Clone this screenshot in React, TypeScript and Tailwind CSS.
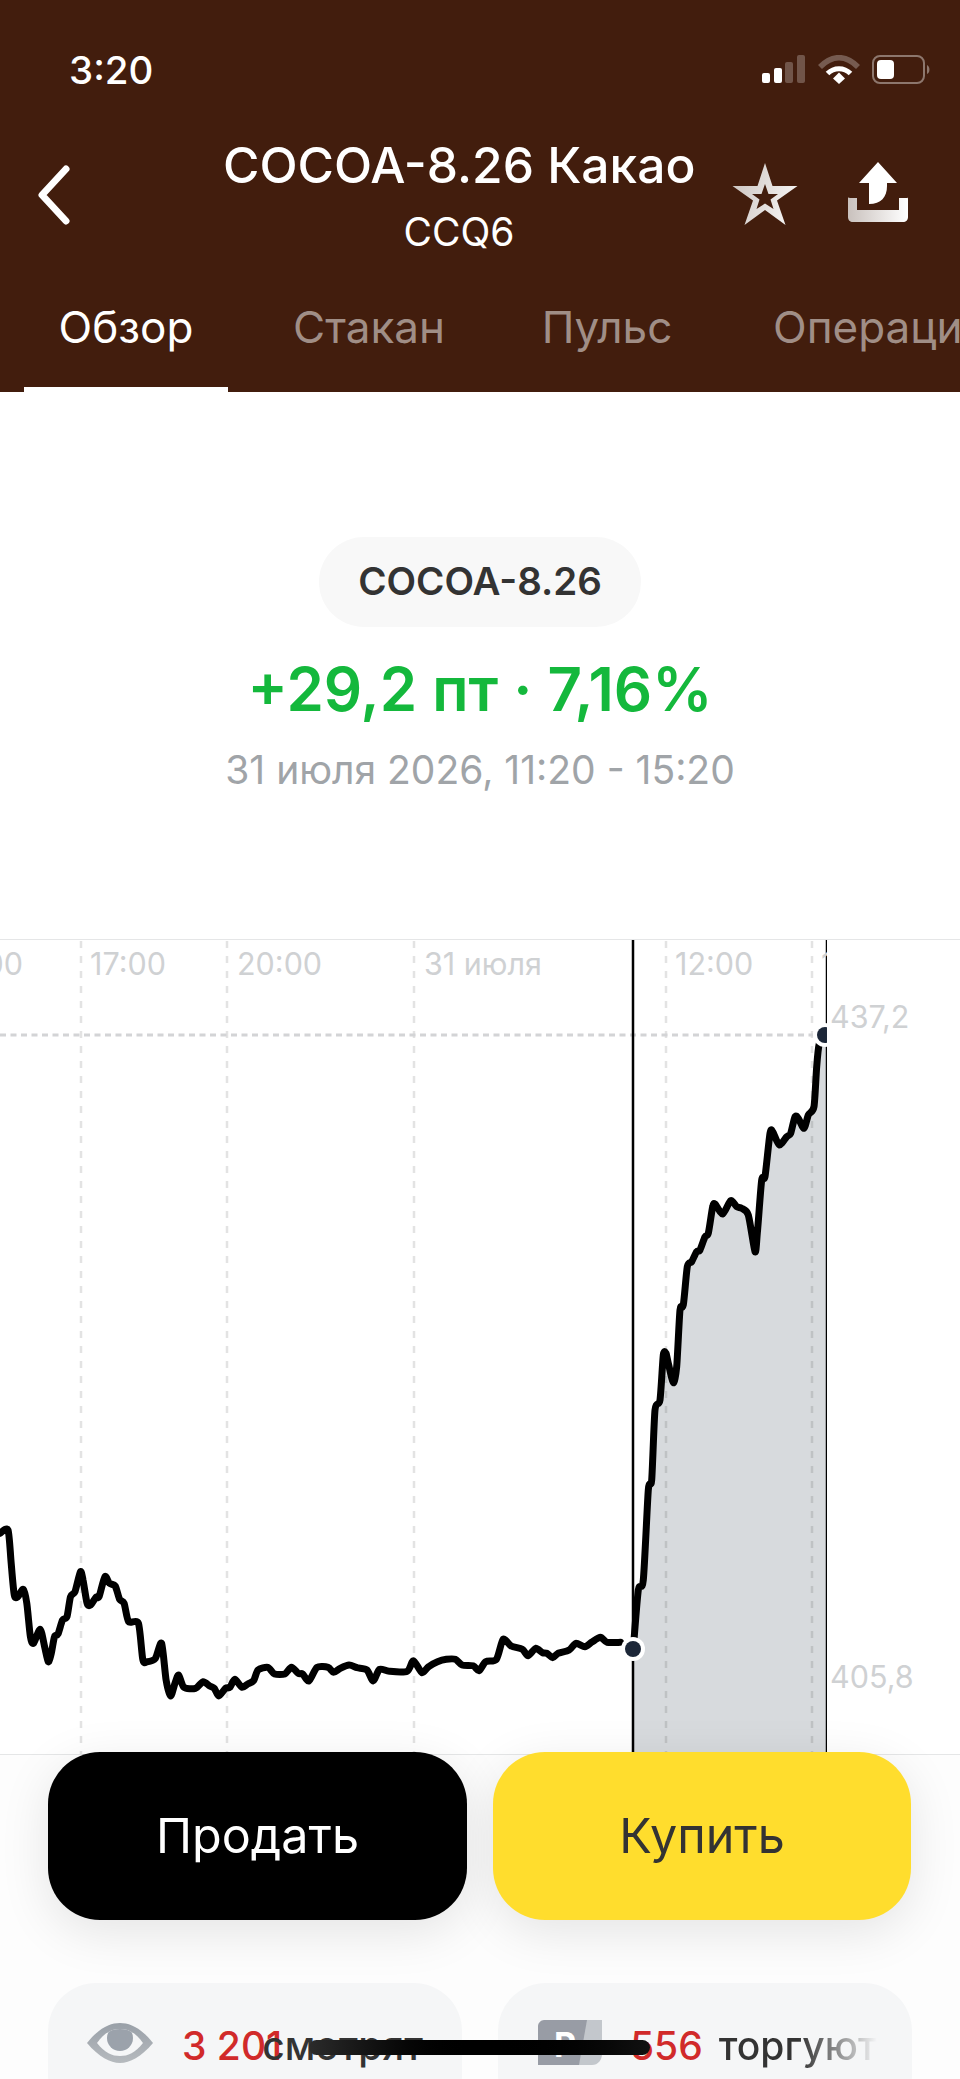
import React from "react";

const rawLeft: number[][] = [[0,160],[18,150],[25,250],[32,345],[40,350],[52,328],[60,370],[68,470],[75,490],[90,448],[100,500],[108,545],[115,520],[122,470],[130,462],[140,420],[150,410],[158,350],[168,335],[180,275],[186,300],[195,370],[203,375],[215,352],[222,350],[235,290],[245,310],[258,318],[268,358],[278,370],[288,425],[310,430],[320,540],[330,545],[348,535],[362,490],[372,600],[382,648],[392,610],[400,585],[412,622],[438,625],[455,605],[470,618],[480,625],[490,648],[505,625],[515,622],[526,598],[542,622],[555,612],[568,602],[578,570],[600,562],[615,582],[638,582],[653,562],[668,580],[678,582],[692,603],[710,562],[735,562],[747,577],[762,565],[782,555],[800,563],[822,570],[836,603],[850,568],[872,574],[912,574],[926,542],[945,578],[960,560],[980,545],[1000,538],[1020,538],[1035,555],[1060,557],[1073,572],[1088,545],[1112,538],[1127,478],[1145,498],[1170,508],[1183,527],[1200,505],[1215,518],[1225,520],[1238,533],[1250,520],[1275,510],[1290,490],[1310,500],[1325,487],[1345,472],[1360,487],[1390,487]];
const rawRightA: number[][] = [[100,745],[115,570],[130,540],[145,270],[155,240],[165,30],[180,0]];
const rawRightB: number[][] = [[190,1065],[198,1060],[205,1090],[220,1148],[230,1100],[240,930],[250,915],[262,800],[275,785],[290,755],[300,750],[315,710],[325,700],[338,620],[345,612],[368,642],[392,602],[410,620],[425,625],[445,645],[465,755],[472,700],[485,540],[495,530],[510,400],[518,395],[538,435],[560,410],[572,400],[585,350],[595,355],[612,385],[625,345],[642,320],[650,200],[658,130],[675,105]];

const leftPts = rawLeft.map(([x, y]) => [x / 2.24, 1480 + y / 3]);
const rightPts = [
  ...rawRightA.map(([x, y]) => [600 + x / 3, 1400 + y / 3]),
  ...rawRightB.map(([x, y]) => [600 + x / 3, 1000 + y / 3]),
];

function smooth(p: number[][]) {
  let d = `M${p[0][0].toFixed(1)} ${p[0][1].toFixed(1)}`;
  for (let i = 0; i < p.length - 1; i++) {
    const a = p[Math.max(i - 1, 0)];
    const b = p[i];
    const c = p[i + 1];
    const e = p[Math.min(i + 2, p.length - 1)];
    const c1x = b[0] + (c[0] - a[0]) / 8;
    const c1y = b[1] + (c[1] - a[1]) / 8;
    const c2x = c[0] - (e[0] - b[0]) / 8;
    const c2y = c[1] - (e[1] - b[1]) / 8;
    d += `C${c1x.toFixed(1)} ${c1y.toFixed(1)} ${c2x.toFixed(1)} ${c2y.toFixed(1)} ${c[0].toFixed(1)} ${c[1].toFixed(1)}`;
  }
  return d;
}

const leftD = smooth(leftPts);
const rightD = smooth(rightPts);
const fillD = `${rightD}L830 1035L830 1754L633 1754Z`;
const gridX = [81, 227, 414, 666, 812];
const font = "Inter, 'Liberation Sans', sans-serif";

function Chart() {
  return (
    <svg width="960" height="815" viewBox="0 939 960 815" className="block border-0">
      <defs>
        <clipPath id="chartClip">
          <rect x="0" y="939" width="827" height="815" />
        </clipPath>
      </defs>
      <line x1="0" x2="960" y1="939.5" y2="939.5" stroke="#e5e6e7" strokeWidth="1" />
      <g clipPath="url(#chartClip)">
        <path d={fillD} fill="#d7dadd" />
        {gridX.map((x) => (
          <line key={x} x1={x} x2={x} y1="941" y2="1754" stroke="#000" strokeOpacity="0.11" strokeWidth="2.5" strokeDasharray="7 8" />
        ))}
        <line x1="0" x2="822" y1="1035" y2="1035" stroke="#d3d4d6" strokeWidth="3" strokeDasharray="6 4.5" />
        <line x1="633" x2="633" y1="940" y2="1754" stroke="#000" strokeWidth="2.5" />
        <line x1="826.500" x2="826.500" y1="940" y2="1754" stroke="#000" strokeWidth="1.5" />
        <path d={leftD} fill="none" stroke="#000" strokeWidth="7" strokeLinejoin="round" strokeLinecap="round" />
        <path d={rightD} fill="none" stroke="#000" strokeWidth="7" strokeLinejoin="round" strokeLinecap="round" />
        <circle cx="633" cy="1649" r="12" fill="#fff" />
        <circle cx="633" cy="1649" r="8" fill="#1c2738" />
        <circle cx="825" cy="1035" r="12" fill="#fff" />
        <circle cx="825" cy="1035" r="8" fill="#1c2738" />
        <text x="821" y="975" fontSize="30.5" fill="#cfd1d3" fontFamily={font}>15:00</text>
      </g>
      <g fontSize="30.5" fill="#cfd1d3" fontFamily={font}>
        <text x="23" y="975" textAnchor="end">14:00</text>
        <text x="90" y="975">17:00</text>
        <text x="237" y="975">20:00</text>
        <text x="424" y="975">31 июля</text>
        <text x="675" y="975">12:00</text>
        <text x="830" y="1028">437,2</text>
        <text x="830" y="1688">405,8</text>
      </g>
    </svg>
  );
}

function StatusIcons() {
  return (
    <svg width="172" height="32" viewBox="0 0 172 32" className="block">
      <g fill="#fff">
        <rect x="0" y="18" width="8" height="10" rx="2" />
        <rect x="12" y="13" width="8" height="15" rx="2" />
        <rect x="23" y="7" width="8" height="21" rx="2" opacity="0.25" />
        <rect x="35" y="0" width="8" height="28" rx="2" opacity="0.25" />
      </g>
      <path d="M58 12C70 -0.5 84 -0.5 96 12" fill="none" stroke="#fff" strokeOpacity="0.28" strokeWidth="5.5" />
      <path d="M65.5 18.5C72 12 82 12 88.5 18.5" fill="none" stroke="#fff" strokeWidth="5" />
      <path d="M71 23.5L77 17.5L83 23.5L77 29Z" fill="#fff" />
      <rect x="111" y="1" width="51" height="27" rx="7" fill="none" stroke="#fff" strokeOpacity="0.4" strokeWidth="2" />
      <rect x="115" y="5" width="17" height="19" rx="4" fill="#fff" />
      <path d="M165 10C168 11 168.500 18 165 19Z" fill="#fff" fillOpacity="0.4" />
    </svg>
  );
}

function Star() {
  return (
    <svg width="66" height="63" viewBox="0 0 66 63" className="block">
      <defs>
        <linearGradient id="starG" x1="0" y1="0" x2="1" y2="0.3">
          <stop offset="0" stopColor="#c9c1bd" />
          <stop offset="1" stopColor="#f3f1f0" />
        </linearGradient>
      </defs>
      <path
        fillRule="evenodd"
        fill="url(#starG)"
        d="M33 0L40.500 23H65.500L45 37.500L53.500 62L33 47L12.500 62L21 37.500L0.500 23H25.500ZM33 21L29.500 31H20L27.500 36.500L24.500 46L33 40.500L41.500 46L38.500 36.500L46 31H36.500Z"
      />
    </svg>
  );
}

function Share() {
  return (
    <svg width="60" height="61" viewBox="0 0 60 61" className="block">
      <defs>
        <linearGradient id="trayG" x1="0" y1="0" x2="1" y2="0">
          <stop offset="0" stopColor="#c9c1bd" />
          <stop offset="1" stopColor="#fff" />
        </linearGradient>
      </defs>
      <path d="M30 0L49 21H39V24C39 35 33 42 21 42V21H11Z" fill="#fff" />
      <path d="M0 36C0 35 1 36 2 36H9V48H51V36H58C59 36 60 35 60 37V55C60 58 58 60 55 60H5C2 60 0 58 0 55Z" fill="url(#trayG)" />
    </svg>
  );
}

function Eye() {
  return (
    <svg width="66" height="40" viewBox="0 0 66 40" className="block">
      <defs>
        <linearGradient id="eyeG" x1="0" y1="0" x2="0" y2="1">
          <stop offset="0" stopColor="#99a0a8" />
          <stop offset="1" stopColor="#b6babe" />
        </linearGradient>
        <clipPath id="eyeIn">
          <path d="M10 20C18 9 25 6 33 6C41 6 48 9 56 20C48 30 41 33 33 33C25 33 18 30 10 20Z" />
        </clipPath>
      </defs>
      <path d="M0 20C12 5 23 0 33 0C43 0 54 5 66 20C54 34 43 40 33 40C23 40 12 34 0 20Z" fill="url(#eyeG)" />
      <path d="M10 20C18 9 25 6 33 6C41 6 48 9 56 20C48 30 41 33 33 33C25 33 18 30 10 20Z" fill="#f5f6f7" />
      <g clipPath="url(#eyeIn)">
        <circle cx="33" cy="15" r="13" fill="#9ba2ab" />
      </g>
    </svg>
  );
}

function RubIcon() {
  return (
    <svg width="64" height="46" viewBox="0 0 64 46" className="block">
      <path d="M42 0H64V34C64 40 60 45 54 45H35Z" fill="#c3c7cc" />
      <path d="M6 0H49L41 45H0V6C0 3 3 0 6 0Z" fill="#989ca5" />
      <text x="16" y="37" fontSize="34" fontWeight="700" fill="#fff" fontFamily={font}>P</text>
    </svg>
  );
}

export default function App() {
  return (
    <div className="relative w-[960px] h-[2079px] overflow-hidden bg-white font-['Inter','Liberation_Sans',sans-serif]">
      <header className="h-[392px] bg-[#421d0d] text-white overflow-hidden">
        <div className="flex justify-between items-start h-[136px] pl-[69px] pr-[26px] pt-[47px]">
          <span className="text-[38.5px] leading-[46px] font-medium">3:20</span>
          <div className="pt-[8px]">
            <StatusIcons />
          </div>
        </div>
        <div className="flex h-[119px]">
          <svg width="33" height="60" viewBox="0 0 33 60" className="block ml-[37px] mt-[29px] shrink-0" fill="none" stroke="#fff" strokeWidth="7" strokeLinecap="round" strokeLinejoin="round">
            <path d="M29 4L5 30L29 56" />
          </svg>
          <div className="ml-[153px] w-[472px] shrink-0 text-center whitespace-nowrap">
            <div className="text-[49.7px] leading-[58px] font-medium">COCOA-8.26 Какао</div>
            <div className="text-[39px] leading-[46px] mt-[15px]">CCQ6</div>
          </div>
          <div className="ml-[37px] mt-[27px] shrink-0">
            <Star />
          </div>
          <div className="ml-[50px] mt-[26px] shrink-0">
            <Share />
          </div>
        </div>
        <nav className="flex ml-[24px] gap-[32px] h-[137px] text-[44px] leading-[54px] text-[#a08e86] whitespace-nowrap">
          <div className="w-[204px] shrink-0 h-[137px] pt-[45px] text-center text-white border-b-[5px] border-white">Обзор</div>
          <div className="w-[218px] shrink-0 pt-[45px] text-center">Стакан</div>
          <div className="w-[194px] shrink-0 pt-[45px] text-center">Пульс</div>
          <div className="shrink-0 pl-[37px] pt-[45px]">Операции</div>
        </nav>
      </header>

      <section className="flex flex-col items-center pt-[145px] h-[547px]">
        <div className="flex items-center justify-center w-[322px] h-[90px] rounded-full bg-[#f8f8f8] text-[38.5px] font-semibold text-[#333333]">COCOA-8.26</div>
        <div className="mt-[28px] text-[60px] leading-[68px] font-semibold text-[#14b83c]">+29,2 пт · 7,16%</div>
        <div className="mt-[24px] text-[39px] leading-[46px] text-[#a0a4a8]">31 июля 2026, 11:20 - 15:20</div>
      </section>

      <Chart />

      <div className="h-[325px] border-t border-[#e5e6e7] bg-[#fdfdfd]">
        <div className="flex gap-[26px] pl-[48px] -mt-[3px] relative">
          <button className="w-[419px] h-[168px] rounded-[52px] bg-black text-white text-[48.5px] shadow-[0_12px_50px_rgba(0,0,0,0.1)]">Продать</button>
          <button className="w-[418px] h-[168px] rounded-[52px] bg-[#ffdd2d] text-[#333333] text-[48.5px] shadow-[0_12px_50px_rgba(0,0,0,0.1)]">Купить</button>
        </div>
        <div className="flex gap-[36px] pl-[48px] mt-[63px]">
          <div className="flex items-start w-[414px] h-[140px] rounded-[48px] bg-[#f5f6f7] pl-[39px] pt-[40px] whitespace-nowrap text-[39px] leading-[46px] font-medium">
            <Eye />
            <span className="ml-[29px] text-[#d12a2a]">3 201</span>
            <span className="-ml-[20px] text-[#333333]">смотрят</span>
          </div>
          <div className="flex items-start w-[414px] h-[140px] rounded-[48px] bg-[#f5f6f7] pl-[40px] pt-[37px] whitespace-nowrap text-[39px] leading-[46px] font-medium">
            <RubIcon />
            <span className="ml-[28px] text-[#d12a2a] pt-[3px]">556</span>
            <span className="ml-[16px] pt-[3px] bg-gradient-to-r from-[#333333] from-[50%] to-[#f5f6f7] to-[100%] bg-clip-text text-transparent">торгуют</span>
          </div>
        </div>
      </div>

      <div className="absolute left-[309px] top-[2040px] w-[341px] h-[15px] rounded-full bg-gradient-to-r from-[#2b2b2b] via-black to-[#111111]" />
    </div>
  );
}
